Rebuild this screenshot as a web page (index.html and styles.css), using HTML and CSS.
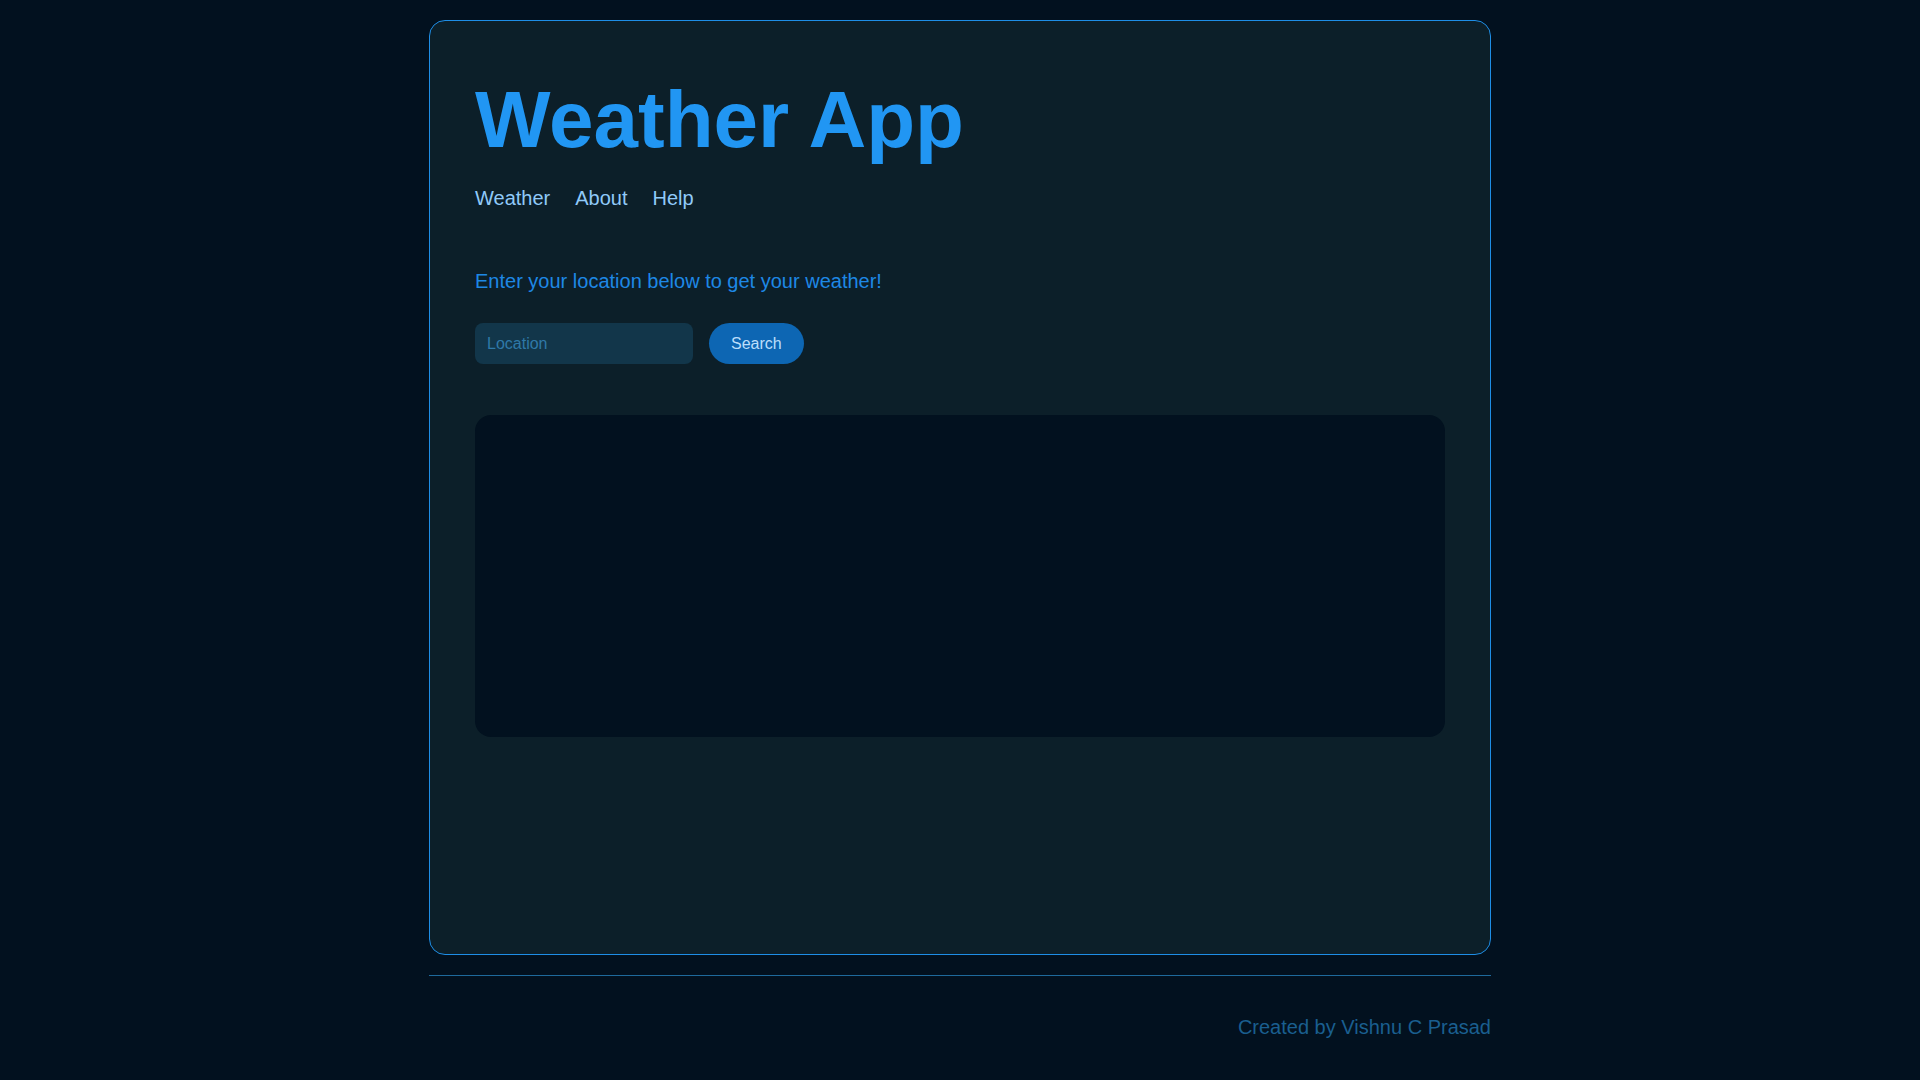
FILE: index.html
```html
<!DOCTYPE html>
<html lang="en">
<head>
<meta charset="utf-8">
<title>Weather App</title>
<link rel="stylesheet" href="styles.css">
</head>
<body>
<div class="page">
  <main class="card">
    <h1 class="title">Weather App</h1>
    <nav class="nav">
      <a href="#" class="nav-link">Weather</a>
      <a href="#" class="nav-link">About</a>
      <a href="#" class="nav-link">Help</a>
    </nav>
    <p class="intro">Enter your location below to get your weather!</p>
    <form class="search">
      <input class="search-input" type="text" placeholder="Location">
      <button class="search-btn" type="button">Search</button>
    </form>
    <section class="result"></section>
  </main>
  <footer class="footer">
    <p class="credit">Created by Vishnu C Prasad</p>
  </footer>
</div>
</body>
</html>
```

FILE: styles.css
```css
* { box-sizing: border-box; }

html, body {
  margin: 0;
  padding: 0;
  background: #02111f;
}

body {
  font-family: "Liberation Sans", Arial, sans-serif;
}

.page {
  width: 1062px;
  margin: 0 auto;
  padding-top: 20px;
}

.card {
  background: #0c1f29;
  border: 1px solid #1e8ee6;
  border-radius: 16px;
  padding: 53px 45px 217px;
  display: flex;
  flex-direction: column;
}

.title {
  margin: 0;
  font-size: 80px;
  line-height: 92px;
  font-weight: 700;
  color: #2196f3;
}

.nav {
  display: flex;
  gap: 25px;
  margin-top: 21px;
}

.nav-link {
  font-size: 20px;
  line-height: 23px;
  color: #90caf9;
  text-decoration: none;
}

.intro {
  margin: 60px 0 0;
  font-size: 20px;
  line-height: 23px;
  color: #1e88e5;
}

.search {
  display: flex;
  gap: 16px;
  margin-top: 30px;
}

.search-input {
  width: 218px;
  height: 41px;
  border: none;
  outline: none;
  border-radius: 8px;
  background: #12364a;
  color: #90caf9;
  padding: 0 12px;
  font-family: "Liberation Sans", Arial, sans-serif;
  font-size: 16px;
}

.search-input::placeholder {
  color: #2f79a8;
}

.search-btn {
  height: 41px;
  padding: 0 22px;
  border: none;
  border-radius: 21px;
  background: #0d66b3;
  color: #bbdefb;
  font-family: "Liberation Sans", Arial, sans-serif;
  font-size: 16px;
  cursor: pointer;
}

.result {
  margin-top: 51px;
  height: 322px;
  background: #02111f;
  border-radius: 16px;
}

.footer {
  margin-top: 20px;
  border-top: 1px solid #1e6a9c;
  padding-top: 40px;
}

.credit {
  margin: 0;
  text-align: right;
  font-size: 20px;
  line-height: 23px;
  color: #1a5f8f;
}
```
